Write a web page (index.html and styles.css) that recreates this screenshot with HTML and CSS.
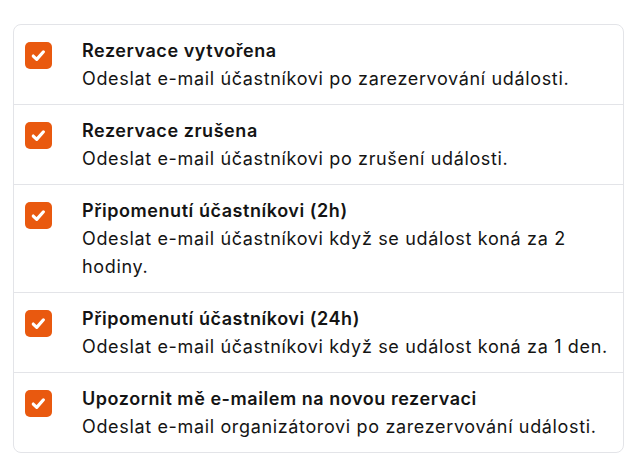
FILE: index.html
```html
<!DOCTYPE html>
<html lang="cs">
<head>
    <meta charset="UTF-8">
    <meta name="viewport" content="width=device-width, initial-scale=1.0">
    <title>Oznámení</title>
    <link rel="stylesheet" href="styles.css">
</head>
<body>
    <div class="card">
        <label class="row">
            <span class="check"><svg viewBox="0 0 20 20"><path d="M5 10.5l3.3 3.2 6.4-7.2"/></svg></span>
            <span class="text">
                <span class="title">Rezervace vytvořena</span>
                <span class="desc">Odeslat e-mail účastníkovi po zarezervování události.</span>
            </span>
        </label>
        <label class="row">
            <span class="check"><svg viewBox="0 0 20 20"><path d="M5 10.5l3.3 3.2 6.4-7.2"/></svg></span>
            <span class="text">
                <span class="title">Rezervace zrušena</span>
                <span class="desc">Odeslat e-mail účastníkovi po zrušení události.</span>
            </span>
        </label>
        <label class="row">
            <span class="check"><svg viewBox="0 0 20 20"><path d="M5 10.5l3.3 3.2 6.4-7.2"/></svg></span>
            <span class="text">
                <span class="title">Připomenutí účastníkovi (2h)</span>
                <span class="desc">Odeslat e-mail účastníkovi když se událost koná za 2 hodiny.</span>
            </span>
        </label>
        <label class="row">
            <span class="check"><svg viewBox="0 0 20 20"><path d="M5 10.5l3.3 3.2 6.4-7.2"/></svg></span>
            <span class="text">
                <span class="title">Připomenutí účastníkovi (24h)</span>
                <span class="desc">Odeslat e-mail účastníkovi když se událost koná za 1 den.</span>
            </span>
        </label>
        <label class="row">
            <span class="check"><svg viewBox="0 0 20 20"><path d="M5 10.5l3.3 3.2 6.4-7.2"/></svg></span>
            <span class="text">
                <span class="title">Upozornit mě e-mailem na novou rezervaci</span>
                <span class="desc">Odeslat e-mail organizátorovi po zarezervování události.</span>
            </span>
        </label>
    </div>
</body>
</html>
```

FILE: styles.css
```css
body {
    margin: 24px 16px 0 13px;
    font-family: Inter, "Noto Sans", sans-serif;
    color: #141414;
    background: #fff;
}
.card {
    border: 1px solid #e3e4e8;
    border-radius: 8px;
}
.row {
    display: flex;
    align-items: flex-start;
    padding: 12px 12px 11px 11px;
    border-bottom: 1px solid #e3e4e8;
    cursor: pointer;
}
.row:last-child { border-bottom: none; }
.check {
    flex: none;
    width: 27px;
    height: 27px;
    margin-top: 5px;
    margin-right: 30px;
    border-radius: 5px;
    background: #e9590f;
    display: flex;
    align-items: center;
    justify-content: center;
}
.check svg {
    width: 21px;
    height: 21px;
    fill: none;
    stroke: #fff;
    stroke-width: 3;
    stroke-linecap: round;
    stroke-linejoin: round;
}
.text {
    display: flex;
    flex-direction: column;
    font-size: 18px;
    line-height: 28px;
}
.title {
    font-weight: 600;
    letter-spacing: 0.55px;
}
.desc {
    font-weight: 400;
    letter-spacing: 0.65px;
}
```
